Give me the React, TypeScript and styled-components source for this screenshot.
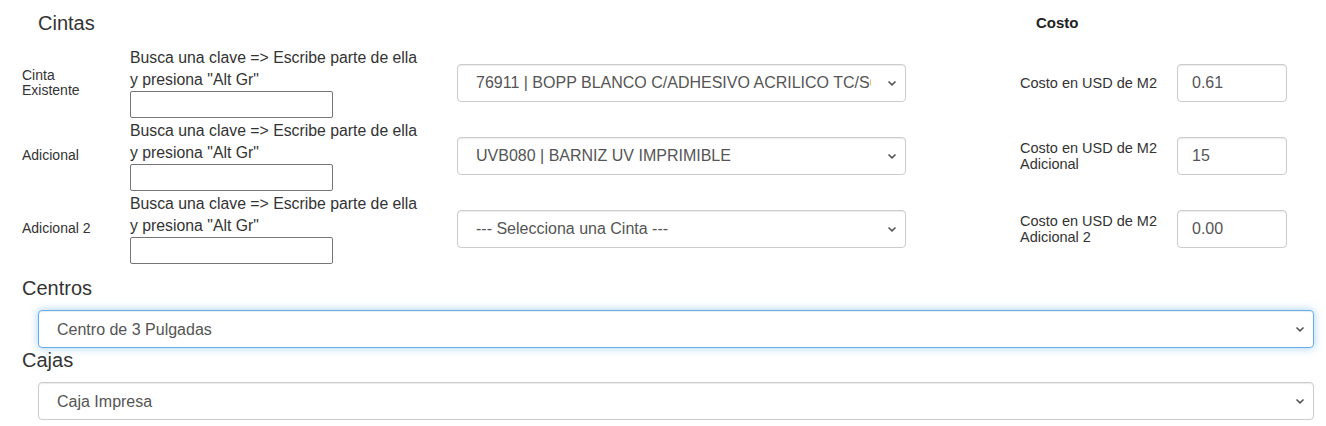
import React from 'react';
import styled, { createGlobalStyle } from 'styled-components';

const GlobalStyle = createGlobalStyle`
  body {
    margin: 0;
    background: #fff;
    font-family: "Liberation Sans", Arial, sans-serif;
    color: #333;
  }
`;

const Page = styled.div`
  padding: 11px 12px 0 22px;
`;

const Grid = styled.div`
  display: grid;
  grid-template-columns: 108px 327px 449px 114px 157px 110px;
  align-items: center;
`;

const HeaderRow = styled(Grid)`
  height: 35px;
  align-items: start;
`;

const Title = styled.h3<{ $indent?: number; $top?: number; $bottom?: number }>`
  margin: ${(p) => p.$top ?? 0}px 0 ${(p) => p.$bottom ?? 0}px ${(p) => p.$indent ?? 0}px;
  font-size: 20px;
  font-weight: normal;
  line-height: 24px;
  color: #333;
`;

const CostTitle = styled.div`
  grid-column: 5;
  padding-left: 16px;
  font-size: 15px;
  font-weight: bold;
  line-height: 24px;
  color: #222;
`;

const Row = styled(Grid)`
  height: 73px;
`;

const Label = styled.div`
  font-size: 14px;
  line-height: 15px;
  color: #333;
`;

const Search = styled.div`
  display: flex;
  flex-direction: column;
  align-items: flex-start;
  font-size: 15.8px;
  line-height: 22px;
  color: #333;
`;

const SearchInput = styled.input`
  box-sizing: border-box;
  width: 203px;
  height: 27px;
  margin: 0;
  border: 1px solid #767676;
  border-radius: 2px;
  background: #fff;
`;

const SelectWrap = styled.div<{ $indent?: number }>`
  position: relative;
  margin-left: ${(p) => p.$indent ?? 0}px;
`;

const Select = styled.select<{ $focused?: boolean }>`
  box-sizing: border-box;
  width: 100%;
  height: 38px;
  padding: 0 34px 0 18px;
  appearance: none;
  background: #fff;
  border: 1px solid ${(p) => (p.$focused ? '#66afe9' : '#ccc')};
  border-radius: 4px;
  box-shadow: ${(p) =>
    p.$focused
      ? 'inset 0 1px 1px rgba(0,0,0,.075), 0 0 8px rgba(102,175,233,.6)'
      : 'inset 0 1px 1px rgba(0,0,0,.075)'};
  font-family: "Liberation Sans", Arial, sans-serif;
  font-size: 16px;
  color: #555;
  outline: none;
`;

const Chevron = styled.svg`
  position: absolute;
  right: 9px;
  top: 50%;
  margin-top: -3px;
  pointer-events: none;
`;

const CostLabel = styled.div`
  grid-column: 5;
  font-size: 14.5px;
  line-height: 16px;
  color: #333;
`;

const CostInput = styled.input`
  box-sizing: border-box;
  width: 110px;
  height: 38px;
  padding: 0 14px;
  border: 1px solid #ccc;
  border-radius: 4px;
  box-shadow: inset 0 1px 1px rgba(0,0,0,.075);
  font-family: "Liberation Sans", Arial, sans-serif;
  font-size: 16px;
  color: #555;
  outline: none;
`;

const Block = styled.div`
  display: flex;
  flex-direction: column;
`;

const ArrowIcon = () => (
  <Chevron width="10" height="7" viewBox="0 0 10 7">
    <path d="M1.5 1.5 L5 4.8 L8.5 1.5" fill="none" stroke="#555" strokeWidth="1.6" />
  </Chevron>
);

type Cinta = {
  label: string[];
  option: string;
  costLabel: string[];
  cost: string;
};

const cintas: Cinta[] = [
  {
    label: ['Cinta', 'Existente'],
    option: '76911 | BOPP BLANCO C/ADHESIVO ACRILICO TC/S60 GLASSINE',
    costLabel: ['Costo en USD de M2'],
    cost: '0.61',
  },
  {
    label: ['Adicional'],
    option: 'UVB080 | BARNIZ UV IMPRIMIBLE',
    costLabel: ['Costo en USD de M2', 'Adicional'],
    cost: '15',
  },
  {
    label: ['Adicional 2'],
    option: '--- Selecciona una Cinta ---',
    costLabel: ['Costo en USD de M2', 'Adicional 2'],
    cost: '0.00',
  },
];

const Lines = ({ lines }: { lines: string[] }) => (
  <>
    {lines.map((l, i) => (
      <div key={i}>{l}</div>
    ))}
  </>
);

function App() {
  return (
    <Page>
      <GlobalStyle />
      <HeaderRow>
        <Title $indent={16} style={{ gridColumn: '1 / 3' }}>
          Cintas
        </Title>
        <CostTitle>Costo</CostTitle>
      </HeaderRow>

      {cintas.map((c, i) => (
        <Row key={i}>
          <Label>
            <Lines lines={c.label} />
          </Label>
          <Search>
            <div>Busca una clave =&gt; Escribe parte de ella</div>
            <div>y presiona "Alt Gr"</div>
            <SearchInput type="text" />
          </Search>
          <SelectWrap>
            <Select defaultValue={c.option}>
              <option>{c.option}</option>
            </Select>
            <ArrowIcon />
          </SelectWrap>
          <CostLabel>
            <Lines lines={c.costLabel} />
          </CostLabel>
          <CostInput defaultValue={c.cost} />
        </Row>
      ))}

      <Block>
        <Title $top={11} $bottom={10}>
          Centros
        </Title>
        <SelectWrap $indent={16}>
          <Select $focused defaultValue="Centro de 3 Pulgadas">
            <option>Centro de 3 Pulgadas</option>
          </Select>
          <ArrowIcon />
        </SelectWrap>
        <Title $bottom={10}>Cajas</Title>
        <SelectWrap $indent={16}>
          <Select defaultValue="Caja Impresa">
            <option>Caja Impresa</option>
          </Select>
          <ArrowIcon />
        </SelectWrap>
      </Block>
    </Page>
  );
}

export default App;
